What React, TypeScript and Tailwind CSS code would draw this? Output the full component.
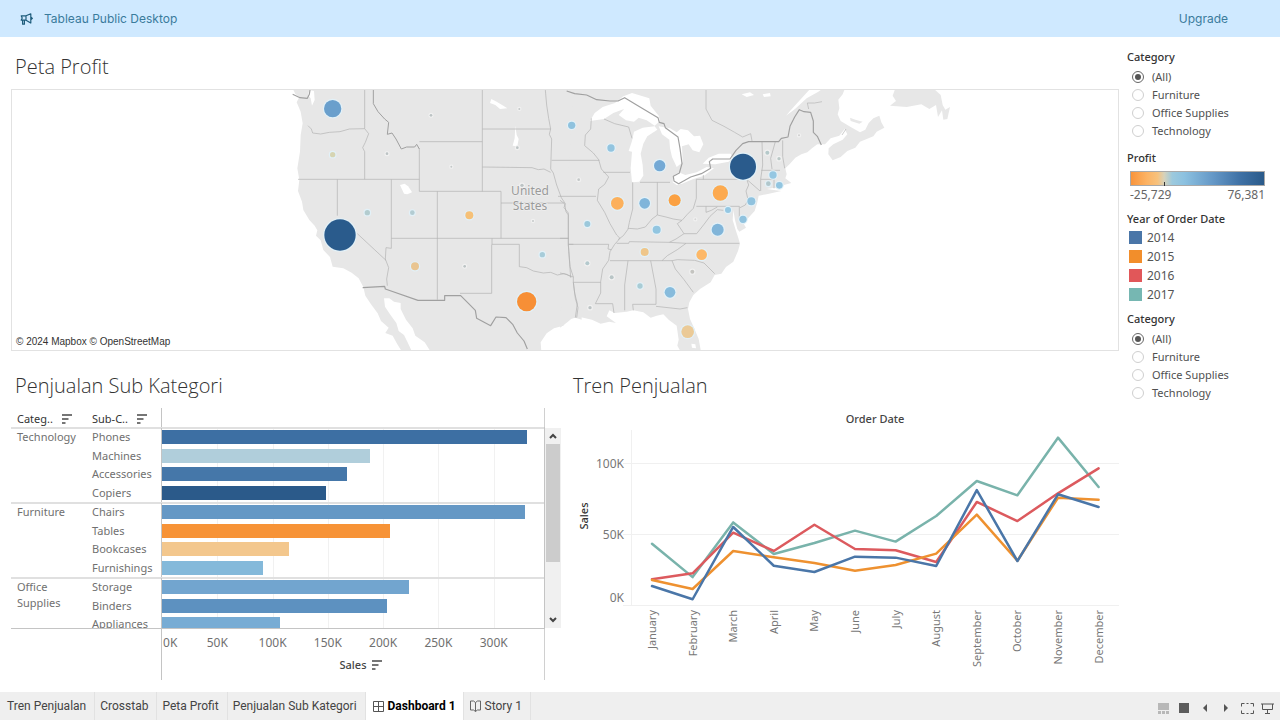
import { useState } from "react";

const categories = ["(All)", "Furniture", "Office Supplies", "Technology"];

const years = [
  { year: "2014", color: "#4a76a8", swatch: "bg-[#4a76a8]", sales: [13.7, 4.4, 55.3, 28, 23.6, 34.4, 33.7, 27.8, 81.3, 31.3, 78.3, 69.4] },
  { year: "2015", color: "#ee9130", swatch: "bg-[#f28e2b]", sales: [18, 11.6, 38.4, 34, 29.9, 24.5, 28.5, 36.5, 64, 31.5, 75.9, 74.5] },
  { year: "2016", color: "#dc5a5e", swatch: "bg-[#e15759]", sales: [18.5, 22.7, 51.3, 38.4, 56.9, 39.8, 38.9, 30.6, 72.9, 59.5, 79, 96.6] },
  { year: "2017", color: "#79b3ab", swatch: "bg-[#76b7b2]", sales: [43.5, 20, 58.5, 36.3, 44, 52.7, 45, 63, 87.7, 77.6, 118.2, 83.5] },
];

const months = [
  "January",
  "February",
  "March",
  "April",
  "May",
  "June",
  "July",
  "August",
  "September",
  "October",
  "November",
  "December",
];

const groups = [
  {
    name: "Technology",
    rows: [
      { name: "Phones", sales: 330, color: "#3d6fa3" },
      { name: "Machines", sales: 188.5, color: "#b0cedb" },
      { name: "Accessories", sales: 167.5, color: "#4577a9" },
      { name: "Copiers", sales: 148.5, color: "#2b5a8a" },
    ],
  },
  {
    name: "Furniture",
    rows: [
      { name: "Chairs", sales: 328.5, color: "#6598c5" },
      { name: "Tables", sales: 206.5, color: "#f79337" },
      { name: "Bookcases", sales: 114.5, color: "#f3c78d" },
      { name: "Furnishings", sales: 91, color: "#84b9da" },
    ],
  },
  {
    name: "Office Supplies",
    rows: [
      { name: "Storage", sales: 223.5, color: "#72a5cf" },
      { name: "Binders", sales: 203.5, color: "#5d91c0" },
      { name: "Appliances", sales: 107, color: "#78acd4" },
    ],
  },
];

const maxSales = 345.5;
const ticks = [0, 50, 100, 150, 200, 250, 300];

// [x, y, radius, color]
const westMarks: [number, number, number, string][] = [
  [158, 71, 26, "#6a9fcc"],
  [158, 209, 8, "#d6d4b2"],
  [321, 206, 4, "#bcc3c4"],
  [453, 91, 4, "#bcc3c4"],
  [718, 72, 3, "#c4c8c8"],
  [712, 188, 4, "#bcc3c4"],
  [514, 245, 3, "#c4c8c8"],
  [726, 301, 5, "#bcc3c4"],
  [759, 408, 3, "#c4c8c8"],
  [568, 391, 12, "#f6c077"],
  [397, 383, 7, "#b3ccd2"],
  [262, 383, 8, "#b3cccf"],
  [180, 450, 47, "#2a5b8c"],
  [405, 544, 12, "#e9c591"],
  [554, 544, 4, "#bcc3c4"],
  [787, 509, 8, "#a7ccd9"],
  [740, 650, 29, "#f78f36"],
];

const eastMarks: [number, number, number, string][] = [
  [35, 121, 11, "#8fc2de"],
  [153, 189, 11, "#93c4df"],
  [56, 284, 4, "#c4c8c8"],
  [299, 242, 17, "#74a9d5"],
  [172, 355, 19, "#fcb05c"],
  [254, 355, 16, "#80b5da"],
  [344, 346, 18, "#fba143"],
  [481, 324, 23, "#fcaa50"],
  [549, 245, 39, "#2a5b8c"],
  [622, 203, 6, "#b5c9ca"],
  [657, 221, 5, "#bac8c6"],
  [717, 151, 3, "#d0d0d0"],
  [639, 270, 11, "#95c7e2"],
  [625, 296, 7, "#b1c7cc"],
  [658, 301, 10, "#92c5e0"],
  [574, 349, 12, "#90c2de"],
  [504, 375, 9, "#95c7e2"],
  [549, 403, 11, "#90c2de"],
  [473, 434, 18, "#81b5d9"],
  [406, 403, 3, "#d6d6d6"],
  [290, 434, 12, "#92c5e0"],
  [82, 417, 9, "#9bc8db"],
  [254, 501, 12, "#efc68a"],
  [425, 509, 16, "#fdb868"],
  [397, 560, 6, "#c4c4c0"],
  [82, 535, 6, "#b4c9cd"],
  [155, 577, 6, "#b9c5c6"],
  [240, 603, 8, "#a9ccd5"],
  [330, 622, 16, "#87bbdc"],
  [90, 668, 5, "#bcc3c4"],
  [383, 740, 19, "#ebca97"],
];

const Marks = ({ marks }: { marks: [number, number, number, string][] }) => (
  <>
    {marks.map(([x, y, r, color]) => (
      <circle
        key={`${x}-${y}`}
        cx={x}
        cy={y}
        r={r}
        fill={color}
        stroke={r > 6 ? "#e2f1f8" : "#f1f1f1"}
        strokeWidth={7}
        paintOrder="stroke"
      />
    ))}
  </>
);

const ProfitMap = () => (
  <svg
    viewBox="-804 15 3318 780"
    preserveAspectRatio="xMidYMid slice"
    className="block h-[260px] w-full"
    role="img"
    aria-label="Peta Profit"
  >
    {/* land */}
    <g fill="#e7e7e7">
      <path d="M38 10L46 27 58 36 50 52 62 80 68 115 62 150 60 200 52 250 58 285 54 318 66 350 70 375 88 405 104 422 112 436 108 452 122 466 130 495 150 516 158 545 190 550 215 563 236 580 250 606 256 632 273 658 293 685 303 708 326 728 316 744 338 752 352 778 366 800H396L382 770 372 750 356 738 349 714 330 688 315 665 312 640 328 640 342 650 362 654 362 672 378 704 398 730 406 752 434 772 452 800H784L782 772 800 745 822 730 850 722 862 704 886 698 905 704V10Z" />
      <g transform="translate(840 0)">
        <path d="M40 10H752L720 45 690 78 678 92 705 72 740 40 775 20 790 10H855L848 28 835 44 838 70 833 88 842 108 872 126 900 142 916 134 926 114 940 100 958 92 964 112 973 128 950 140 940 154 900 170 886 188 862 198 842 216 818 226 805 208 806 190 820 178 848 164 862 148 854 132 838 152 812 160 795 178 772 178 756 190 742 202 724 208 706 218 690 236 676 250 680 268 676 280 694 294 672 300 664 312 644 308 620 312 664 318 620 328 596 332 592 352 584 378 562 402 552 418 558 428 538 440 532 432 525 405 520 375 518 405 528 438 534 456 540 476 534 498 520 530 498 546 484 566 464 570 452 592 420 612 400 630 388 652 384 672 390 702 402 728 416 762 423 800H362L352 782 356 764 350 722 326 704 310 688 290 692 272 698 250 682 220 676 200 680 164 684 148 676 140 694 168 714 148 710 122 716 96 704 60 696 36 700 22 712 0 728Z" />
        <path d="M1006 10L998 32 1008 48 990 62 1040 66 1084 58 1108 72 1128 60 1134 96 1146 76 1150 104 1162 102 1170 66 1156 74 1148 60 1142 30 1120 10Z" />
        <path d="M870 98L886 104 908 110 898 116 872 108Z" />
      </g>
    </g>

    {/* water */}
    <g fill="#ffffff">
      <path d="M88 15L102 18 104 45 96 62 92 40 84 30Z" />
      <path d="M360 300L374 296 384 304 390 312 396 322 382 328 372 326Z" />
      <path d="M634 42L650 50 670 62 682 70 660 72 646 60 630 54Z" />
      <path d="M706 122L710 150 716 162 712 184 698 182 704 160Z" />
      <g transform="translate(840 0)">
        <path d="M90 108L104 84 128 66 165 54 190 34 216 24 268 40 272 62 296 92 300 108 284 122 260 106 236 98 222 110 198 106 176 90 192 72 160 84 132 102Z" />
        <path d="M222 140L248 128 284 124 292 134 262 154 250 176 242 206 248 240 250 272 238 290 216 292 212 250 216 200 206 198 216 168Z" />
        <path d="M296 124L330 130 350 142 362 132 384 136 402 154 420 152 430 178 418 202 398 196 386 178 366 184 368 232 350 246 336 216 330 190 328 164 306 148Z" />
        <path d="M338 292L340 272 356 262 376 270 410 262 440 246 462 250 432 272 400 282 366 296 350 300Z" />
        <path d="M428 236L446 218 476 206 512 206 518 218 506 230 466 238Z" />
        <path d="M545 28L570 22 582 30 560 36ZM608 28L630 24 632 34 612 36Z" />
        <path d="M394 776L406 778 408 790 396 788Z" />
      </g>
    </g>

    {/* state borders */}
    <g fill="none" stroke="#b0b0b0" strokeWidth={2} strokeLinejoin="round">
      <path d="M84 122L94 132 98 144 122 147 148 142 180 140 208 132 254 131" />
      <path d="M254 15V131L266 146 256 172 248 188 254 200V283" />
      <path d="M54 283H418M172 283V392M334 283V490L318 488 316 522 326 548 320 582 322 602M232 446L318 526" />
      <path d="M418 190V319H663V460M418 170H607M607 15V319M472 319V644M334 460H865" />
      <path d="M607 132H812M607 246L756 248 775 254 792 252 812 262M663 354H852" />
      <path d="M636 460V478H718V545L740 548 760 558 790 564 812 562 832 570 852 566 880 576M635 478V625H540" />
      <path d="M796 15L800 60 806 100 812 132 808 148 815 162 812 252 820 264 830 300 844 338 856 356 852 368 865 384V480L870 545 880 576V592L884 624 892 656 886 698" />
      <path d="M815 226H958M834 334H948M865 478H880" />
      <g transform="translate(840 0)">
        <path d="M94 100L92 132 76 150 74 182 100 204 116 224 124 252 146 276 134 298 116 312 112 346 134 382 150 416 170 450 180 460 164 478 150 500 146 526 128 552 122 590 122 624 106 656H158L162 684" />
        <path d="M132 102L164 116 206 126 216 160M130 262H210M240 292H330M218 292V372L208 412 204 432" />
        <path d="M0 346L14 356 18 380 25 390V478H146L144 492 154 494M25 460H0M25 478L32 578M0 564L20 568 34 576M40 592H122M40 592L46 640 54 668 50 698" />
        <path d="M292 292V390M409 283V340L400 370 382 388 366 406 340 402 318 396 292 390 276 402 256 426 232 432 206 430 190 452 174 464" />
        <path d="M170 475H206L208 470 328 472 378 475H538M328 472L348 462 372 446 352 416 366 406M372 446L410 446 432 418 450 394 472 374 490 376" />
        <path d="M409 283H560M409 364H538V402H552M438 364V382L454 376 472 366M430 283V270" />
        <path d="M150 527H336L352 524 404 526M404 526L432 534 464 566M336 527L346 552 372 584 400 622M378 475L352 494 322 512 306 527" />
        <path d="M204 527L194 600V676M272 527L288 612V658H218L220 676M288 664L360 672 382 668" />
        <path d="M560 283L566 300 558 318 564 344 556 360 540 368M560 283L600 318M602 318V283H638M602 283L608 240 606 170M604 256H660M636 252L632 220 646 170M668 166V214L674 250M642 283V310" />
      </g>
    </g>

    {/* country borders */}
    <g fill="none" stroke="#a0a0a0" strokeWidth={3.5} strokeLinejoin="round">
      <path d="M38 28L60 38 82 40 88 28 90 15" />
      <path d="M280 15V56L294 80 314 102 326 112 322 148 336 144 348 162 364 192 380 186 404 186 410 178 418 192" strokeWidth={3} />
      <path d="M248 608L314 604 316 612 414 646H494V632H542L566 656 586 676 590 700 632 722 648 696 678 698 698 718 712 744 732 768 742 792" />
      <g transform="translate(840 0)">
        <path d="M20 18L44 26 80 30 110 44 150 48 174 48 194 38 230 60 294 98 298 112 312 116 316 128 354 156 360 190 366 236 358 264 340 274 342 288 356 296 392 276 424 266 452 250 448 230 458 222H510L528 196 548 176 566 170H656L664 160 684 156 690 124 704 96 718 74 732 80 752 82 760 108V142L772 154 784 180" />
        <path d="M438 15V72L456 106 492 124 524 142 548 156 572 146 576 168M746 72L742 54 764 54 786 50M858 132L846 150" strokeWidth={2} stroke="#b3b3b3" />
      </g>
    </g>

    <g
      fill="#9a9a9a"
      fontFamily="'Noto Sans', sans-serif"
      fontSize={36}
      textAnchor="middle"
      stroke="#efefef"
      strokeWidth={4}
      paintOrder="stroke"
    >
      <text x={750} y={331}>United</text>
      <text x={750} y={375}>States</text>
    </g>

    <Marks marks={westMarks} />
    <g transform="translate(840 0)">
      <Marks marks={eastMarks} />
    </g>
  </svg>
);

const SortIcon = () => (
  <svg viewBox="0 0 10 10" className="size-[10px] shrink-0" stroke="#4a4a4a" strokeWidth={1.6}>
    <path d="M0 1H10M0 5H6.5M0 9H3.5" />
  </svg>
);

const SalesBars = () => (
  <div className="flex text-[11px] text-[#707070]">
    <div className="min-w-0 flex-1">
      <div className="flex h-[19px] border-r border-[#d0d0d0]">
        <div className="flex w-[151px] shrink-0 items-end border-r border-[#c4c4c4] leading-4 text-[#333]">
          <div className="flex w-[75px] items-center justify-between pl-[6px] pr-[14px]">
            Categ..
            <SortIcon />
          </div>
          <div className="flex w-[75px] items-center justify-between pl-[6px] pr-[14px]">
            Sub-C..
            <SortIcon />
          </div>
        </div>
      </div>

      <div className="relative h-[202px] overflow-hidden border-b border-r border-[#c4c4c4]">
        <div className="absolute inset-0 left-[151px]">
          {ticks.slice(1).map((tick) => (
            <div
              key={tick}
              className="absolute inset-y-0 w-px bg-[#f1f1f1]"
              style={{ left: `${(tick / maxSales) * 100}%` }}
            />
          ))}
        </div>
        {groups.map((group) => (
          <div key={group.name} className="relative flex h-[75px] shadow-[inset_0_2px_0_#e0e0e0]">
            <div className="w-[75px] shrink-0 pl-[6px] pt-[2px] leading-4">{group.name}</div>
            <div className="grid flex-1 grid-rows-4 pt-px">
              {group.rows.map((row) => (
                <div key={row.name} className="flex items-center">
                  <div className="w-[75px] shrink-0 pl-[6px] leading-4">{row.name}</div>
                  <div className="flex h-full flex-1 items-center border-l border-[#c4c4c4]">
                    <div
                      className="h-[14px]"
                      style={{
                        width: `${(row.sales / maxSales) * 100}%`,
                        backgroundColor: row.color,
                      }}
                    />
                  </div>
                </div>
              ))}
            </div>
          </div>
        ))}
      </div>

      <div className="flex h-[51px] border-r border-[#d0d0d0]">
        <div className="w-[151px] shrink-0 border-r border-[#c4c4c4]" />
        <div className="flex-1">
          <div className="relative h-7 text-xs">
            {ticks.map((tick) => (
              <span
                key={tick}
                className={`absolute top-[6px] leading-4 ${tick ? "-translate-x-1/2" : "pl-px"}`}
                style={{ left: `${(tick / maxSales) * 100}%` }}
              >
                {tick}K
              </span>
            ))}
          </div>
          <div className="flex items-center justify-center gap-[6px] pl-4 font-medium leading-4 text-[#444]">
            Sales
            <SortIcon />
          </div>
        </div>
      </div>
    </div>

    <div className="mt-5 flex h-[200px] w-4 flex-col bg-[#f0f0f0]">
      <button aria-label="Scroll up" className="flex h-4 items-center justify-center">
        <svg viewBox="0 0 8 6" className="h-[6px] w-2" fill="none" stroke="#444" strokeWidth={2}>
          <path d="M1 5L4 2 7 5" />
        </svg>
      </button>
      <div className="mx-px h-[118px] bg-[#cccccc]" />
      <button aria-label="Scroll down" className="mt-auto flex h-4 items-center justify-center">
        <svg viewBox="0 0 8 6" className="h-[6px] w-2" fill="none" stroke="#444" strokeWidth={2}>
          <path d="M1 1L4 4 7 1" />
        </svg>
      </button>
    </div>
  </div>
);

const TrendChart = () => {
  const x = (i: number) => 79 + i * 40.6;
  const y = (value: number) => 197.5 - value * 1.42;

  return (
    <svg
      viewBox="0 0 546 272"
      className="block w-full"
      fontFamily="'Noto Sans', sans-serif"
      fontSize={12}
      fill="#777"
      role="img"
      aria-label="Tren Penjualan"
    >
      <path d="M58.5 22V198M50 55.5H546M50 126.5H546M50 197.5H546" stroke="#f0f0f0" />
      <text x={302} y={15} textAnchor="middle" fontSize={11} fontWeight={500} fill="#444">
        Order Date
      </text>
      <text transform="translate(15 108) rotate(-90)" textAnchor="middle" fontSize={11} fontWeight={500} fill="#333">
        Sales
      </text>
      <g textAnchor="end">
        <text x={51} y={60}>100K</text>
        <text x={51} y={131}>50K</text>
        <text x={51} y={194}>0K</text>
        {months.map((month, i) => (
          <text key={month} fontSize={11} transform={`translate(${x(i) + 4} 202) rotate(-90)`}>
            {month}
          </text>
        ))}
      </g>
      {[...years].reverse().map((line) => (
        <polyline
          key={line.year}
          points={line.sales.map((value, i) => `${x(i)},${y(value)}`).join(" ")}
          fill="none"
          stroke={line.color}
          strokeWidth={2.5}
          strokeLinecap="round"
          strokeLinejoin="round"
        />
      ))}
    </svg>
  );
};

const CategoryFilter = ({ name }: { name: string }) => {
  const [active, setActive] = useState("(All)");

  return (
    <fieldset>
      <legend className="text-[11px] font-medium leading-4 text-[#333]">Category</legend>
      <div className="mt-[3px] flex flex-col pl-[5px]">
        {categories.map((category) => (
          <label key={category} className="flex h-[18px] items-center gap-2 text-[11px] text-[#505050]">
            <input
              type="radio"
              name={name}
              checked={active === category}
              onChange={() => setActive(category)}
              className="grid size-3 appearance-none place-items-center rounded-full border border-[#cfcfcf] checked:border-[#666] checked:before:size-[6px] checked:before:rounded-full checked:before:bg-[#555] checked:before:content-['']"
            />
            {category}
          </label>
        ))}
      </div>
    </fieldset>
  );
};

const Sidebar = () => (
  <aside className="w-[161px] shrink-0 pl-2 pt-3">
    <CategoryFilter name="map-category" />

    <h3 className="mt-[10px] text-[11px] font-medium leading-4 text-[#333]">Profit</h3>
    <div className="ml-[3px] mr-[15px] mt-[5px]">
      <div className="relative h-[15px] border border-[#a9a9a9] bg-[linear-gradient(to_right,#f9943b,#fcb364_12%,#f7c27d_20%,#d6d2bb_25%,#9cc9dd_31%,#8cc1e0_40%,#6497c6_62%,#3f71a5_82%,#2a5a8a)]">
        <div className="absolute -bottom-px left-1/4 h-1 w-px bg-[#333]" />
      </div>
      <div className="mt-px flex justify-between text-xs leading-4 text-[#666]">
        <span>-25,729</span>
        <span>76,381</span>
      </div>
    </div>

    <h3 className="mt-2 text-[11px] font-medium leading-4 text-[#333]">Year of Order Date</h3>
    <ul className="mt-px pl-[2px] text-xs text-[#555]">
      {years.map((item) => (
        <li key={item.year} className="flex h-[19px] items-center gap-[5px]">
          <span className={`size-[13px] ${item.swatch}`} />
          {item.year}
        </li>
      ))}
    </ul>

    <div className="mt-[7px]">
      <CategoryFilter name="sales-category" />
    </div>
  </aside>
);

const tabs = ["Tren Penjualan", "Crosstab", "Peta Profit", "Penjualan Sub Kategori"];

const Footer = () => (
  <footer className="flex h-7 shrink-0 items-stretch bg-[#efefef] font-['Roboto',sans-serif] text-xs text-[#444]">
    <nav className="flex pl-[2px]">
      {tabs.map((tab) => (
        <button key={tab} className="border-r border-[#e2e2e2] pl-[5px] pr-2">
          {tab}
        </button>
      ))}
      <button className="flex items-center gap-1 bg-white px-[7px] font-bold text-black">
        <svg viewBox="0 0 11 11" className="size-[11px]" fill="none" stroke="#555">
          <path d="M.5.5H10.5V10.5H.5ZM5.5.5V10.5M.5 5.5H10.5" />
        </svg>
        Dashboard 1
      </button>
      <button className="flex items-center gap-1 border-x border-[#e2e2e2] pl-[6px] pr-2">
        <svg viewBox="0 0 11 12" className="h-3 w-[11px]" fill="none" stroke="#666">
          <path d="M5.5 2.5L3.5 1 .5 1V10H3.5L5.5 11.5 7.5 10H10.5V1H7.5ZM5.5 2.5V11.5" />
        </svg>
        Story 1
      </button>
    </nav>
    <div className="ml-auto flex items-center gap-[10px] pr-[6px] pt-1">
      <button aria-label="Show filmstrip">
        <svg viewBox="0 0 11 11" className="size-[11px]" fill="#b8b8b8">
          <path d="M0 0H11V7H0ZM0 8H3V11H0ZM4 8H7V11H4ZM8 8H11V11H8Z" />
        </svg>
      </button>
      <button aria-label="Show tabs" className="size-[10px] bg-[#5c5c5c]" />
      <button aria-label="Previous sheet" className="flex w-[11px] justify-center">
        <svg viewBox="0 0 4 8" className="h-2 w-1" fill="#555">
          <path d="M4 0V8L0 4Z" />
        </svg>
      </button>
      <button aria-label="Next sheet" className="flex w-[11px] justify-center">
        <svg viewBox="0 0 4 8" className="h-2 w-1" fill="#555">
          <path d="M0 0V8L4 4Z" />
        </svg>
      </button>
      <div className="flex gap-[7px]">
        <button aria-label="Full screen">
          <svg viewBox="0 0 13 11" className="h-[11px] w-[13px]" fill="none" stroke="#555">
            <path d="M.5 3.5V.5H3.5M9.5.5H12.5V3.5M12.5 7.5V10.5H9.5M3.5 10.5H.5V7.5M5.5.5H7.5M5.5 10.5H7.5" />
          </svg>
        </button>
        <button aria-label="Presentation mode">
          <svg viewBox="0 0 13 11" className="h-[11px] w-[13px]" fill="none" stroke="#555">
            <path d="M0 1H13M1.5 1V6.5H11.5V1M6.5 6.5V10M4 10.5H9" />
          </svg>
        </button>
      </div>
    </div>
  </footer>
);

const titleStyle = "pl-1 font-['Open_Sans',sans-serif] text-xl font-light leading-6 text-[#333]";

export default function App() {
  return (
    <div className="flex min-h-screen flex-col bg-white font-['Noto_Sans',sans-serif]">
      <header className="flex h-[37px] shrink-0 items-center bg-[#cfe9ff] pl-5 pr-[52px] font-['Inter',sans-serif] text-xs text-[#3a7b9c]">
        <svg viewBox="0 0 13 12" className="mr-[11px] h-3 w-[13px]" fill="none" stroke="#1d5c7c" strokeWidth={1.2} strokeLinejoin="round">
          <path d="M6 2.8H1.2L2.2 5 1.2 7.2H6L10.8 10V.8L6 2.8V7.2M2.6 7.2V11.2H4.4V7.2M10.8 4L12.4 5.4 10.8 6.8" />
        </svg>
        <span>Tableau Public Desktop</span>
        <a href="#" className="ml-auto">
          Upgrade
        </a>
      </header>

      <div className="flex flex-1">
        <main className="min-w-0 flex-1 pl-[11px]">
          <section>
            <h2 className={`${titleStyle} pb-[10px] pt-[18px]`}>Peta Profit</h2>
            <div className="relative border border-[#e2e2e2]">
              <ProfitMap />
              <div className="absolute bottom-0 left-0 bg-white px-1 font-['Liberation_Sans',sans-serif] text-[10px] leading-4 text-[#333]">
                © 2024 Mapbox © OpenStreetMap
              </div>
            </div>
          </section>

          <div className="flex gap-3 pt-[23px]">
            <section className="w-[550px] shrink-0">
              <h2 className={`${titleStyle} pb-[10px]`}>Penjualan Sub Kategori</h2>
              <SalesBars />
            </section>
            <section className="min-w-0 flex-1">
              <h2 className={`${titleStyle} -ml-1 pb-[10px]`}>Tren Penjualan</h2>
              <TrendChart />
            </section>
          </div>
        </main>
        <Sidebar />
      </div>

      <Footer />
    </div>
  );
}
